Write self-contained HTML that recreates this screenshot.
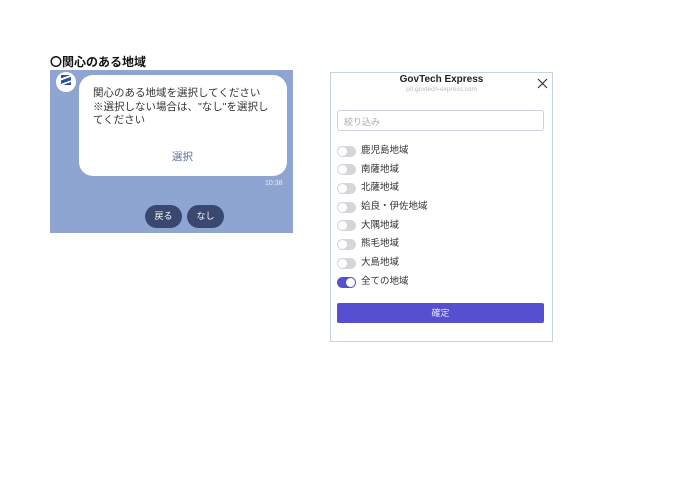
<!DOCTYPE html>
<html><head><meta charset="utf-8"><style>
*{margin:0;padding:0;box-sizing:border-box}
body{width:700px;height:495px;background:#fff;position:relative;font-family:"Liberation Sans","Noto Sans CJK JP",sans-serif;overflow:hidden}
.a{position:absolute}
.tg{position:absolute;left:337px;width:19px;height:11px;border-radius:6px;background:#d4d6dc}
.tg::after{content:"";position:absolute;left:1px;top:1px;width:9px;height:9px;border-radius:50%;background:#fff}
.tg.on{background:#5650d0}.tg.on::after{left:9px}
.lb{position:absolute;left:361px;font-size:9.5px;color:#333;line-height:12px}
</style></head><body>
<div class="a" style="left:50px;top:53px;font-size:12px;font-weight:bold;color:#111">〇関心のある地域</div>
<div class="a" style="left:50px;top:70px;width:243px;height:163px;background:#8ea5d1"></div>
<div class="a" style="left:56px;top:72px;width:20px;height:20px;border-radius:50%;background:#fff"><div class="a" style="left:5px;top:3px;width:10px;height:10px;background:linear-gradient(160deg,#2d4fa0 0 25%,#fff 25% 40%,#2d4fa0 40% 65%,#fff 65% 78%,#2d4fa0 78%)"></div></div>
<div class="a" style="left:79px;top:75px;width:208px;height:101px;background:#fff;border-radius:14px"></div>
<div class="a" style="left:93px;top:87px;font-size:10.5px;line-height:13.5px;color:#333;width:185px">関心のある地域を選択してください<br>※選択しない場合は、"なし"を選択し<br>てください</div>
<div class="a" style="left:172px;top:149px;font-size:10.5px;color:#5b6ea5">選択</div>
<div class="a" style="left:265px;top:180px;font-size:7px;color:#e8eef8">10:38</div>
<div class="a" style="left:145px;top:205px;width:37px;height:23px;border-radius:12px;background:#3a4870;color:#fff;font-size:9px;text-align:center;line-height:23px">戻る</div>
<div class="a" style="left:187px;top:205px;width:37px;height:23px;border-radius:12px;background:#3a4870;color:#fff;font-size:9px;text-align:center;line-height:23px">なし</div>

<div class="a" style="left:330px;top:72px;width:223px;height:270px;border:1px solid #c5d4e4"></div>
<div class="a" style="left:330px;top:74px;width:223px;text-align:center;font-size:10px;font-weight:bold;color:#222">GovTech Express</div>
<div class="a" style="left:330px;top:86px;width:223px;text-align:center;font-size:6.5px;color:#bbb">p0.govtech-express.com</div>
<svg class="a" style="left:537px;top:78px" width="11" height="11"><path d="M1 1L10 10M10 1L1 10" stroke="#333" stroke-width="1.2"/></svg>
<div class="a" style="left:337px;top:110px;width:207px;height:21px;border:1px solid #ccd3dc;border-radius:3px;font-size:9px;color:#aaa;padding:4px 0 0 6px">絞り込み</div>
<div class="tg" style="top:146px"></div><div class="lb" style="top:145px">鹿児島地域</div>
<div class="tg" style="top:164px"></div><div class="lb" style="top:164px">南薩地域</div>
<div class="tg" style="top:183px"></div><div class="lb" style="top:182px">北薩地域</div>
<div class="tg" style="top:202px"></div><div class="lb" style="top:201px">姶良・伊佐地域</div>
<div class="tg" style="top:220px"></div><div class="lb" style="top:220px">大隅地域</div>
<div class="tg" style="top:239px"></div><div class="lb" style="top:238px">熊毛地域</div>
<div class="tg" style="top:258px"></div><div class="lb" style="top:257px">大島地域</div>
<div class="tg on" style="top:277px"></div><div class="lb" style="top:276px">全ての地域</div>
<div class="a" style="left:337px;top:303px;width:207px;height:20px;background:#5650d0;border-radius:2px;color:#e6e4fa;font-size:9px;text-align:center;line-height:20px">確定</div>
</body></html>
